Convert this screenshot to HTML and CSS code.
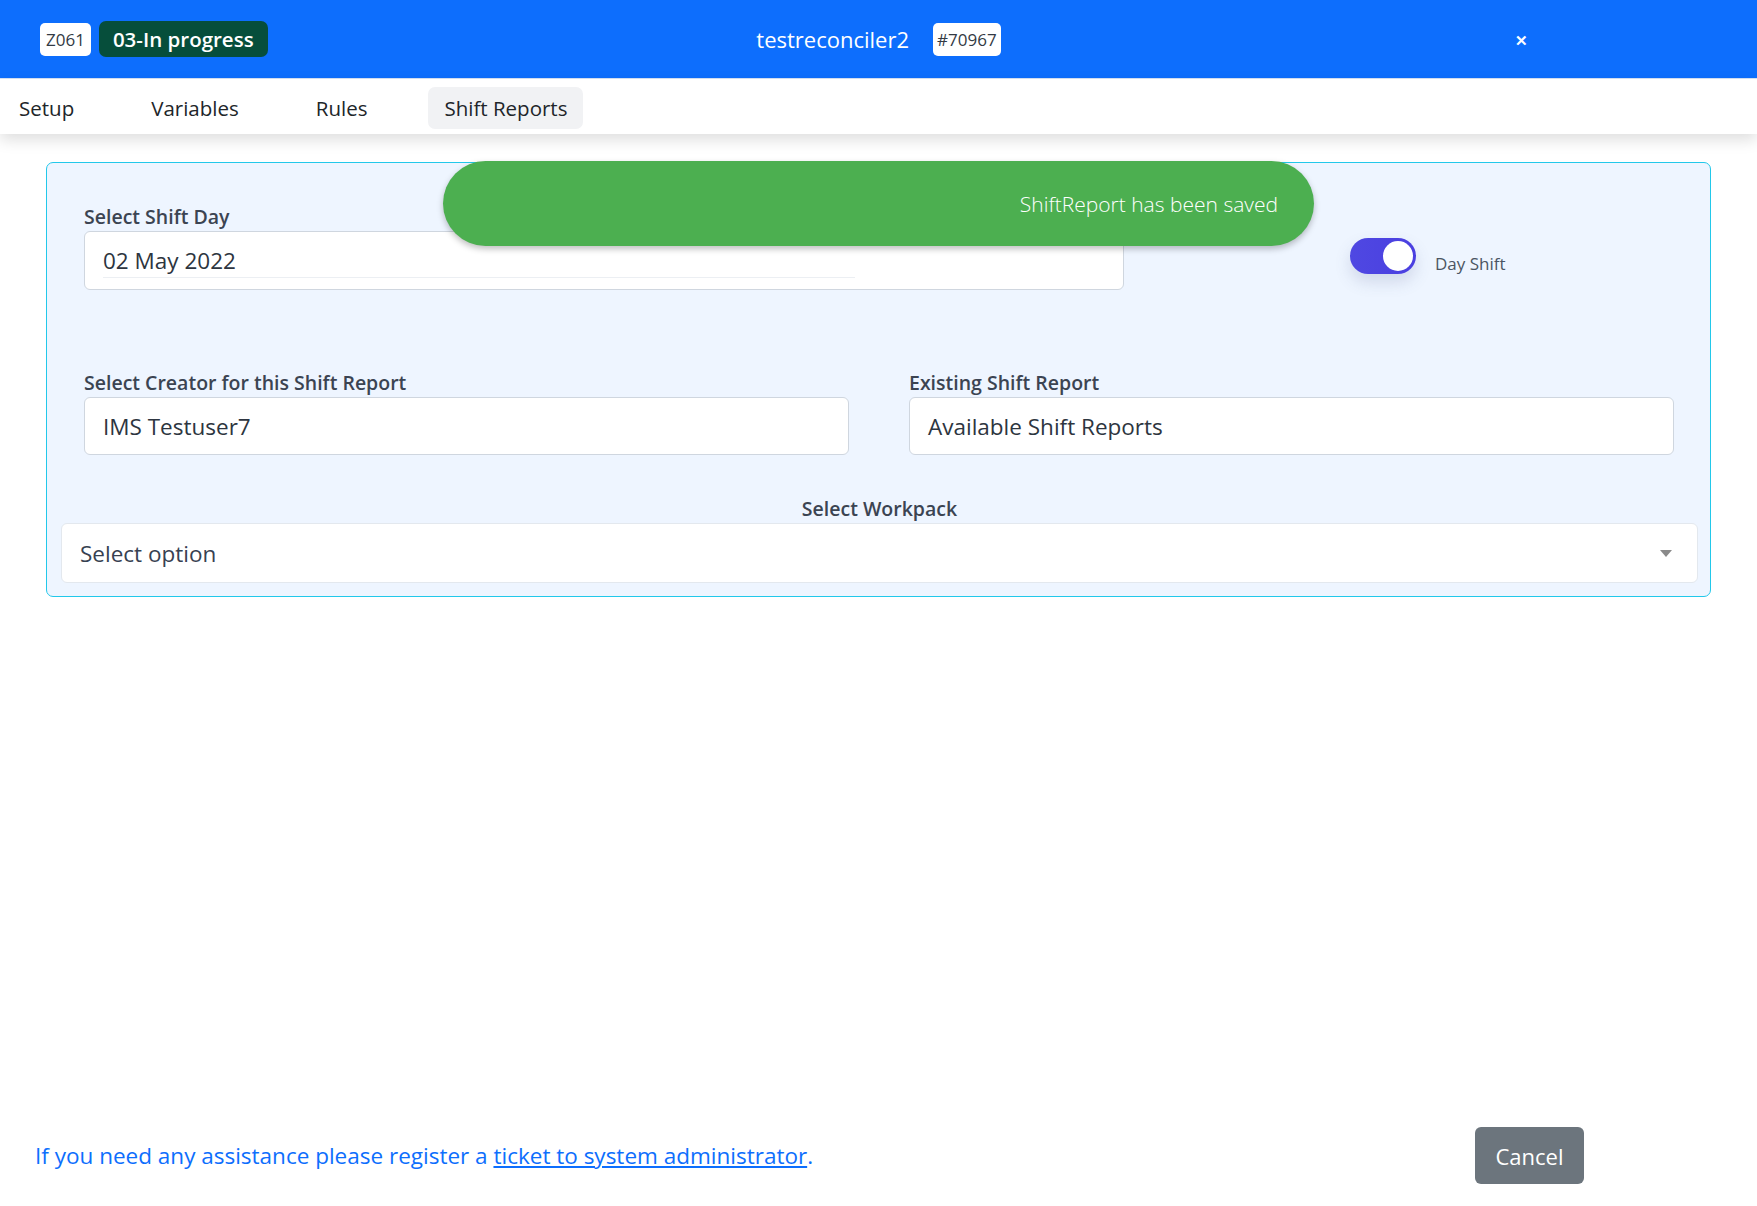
FILE: index.html
```html
<!DOCTYPE html>
<html lang="en">
<head>
<meta charset="utf-8">
<title>Shift Reports</title>
<link rel="stylesheet" href="styles.css">
</head>
<body>
<div class="page">
  <header class="topbar">
    <div class="topbar-left">
      <span class="badge-light">Z061</span>
      <span class="badge-status">03-In progress</span>
    </div>
    <div class="topbar-center">
      <span class="title">testreconciler2</span>
      <span class="badge-light badge-id">#70967</span>
    </div>
    <div class="topbar-right">
      <span class="close">&#x2715;</span>
    </div>
  </header>

  <nav class="tabs">
    <span class="tab">Setup</span>
    <span class="tab">Variables</span>
    <span class="tab">Rules</span>
    <span class="tab active">Shift Reports</span>
  </nav>

  <main class="content">
    <section class="card">
      <div class="row row-day">
        <div class="field field-date">
          <label class="label">Select Shift Day</label>
          <div class="input">
            <span class="date-value">02 May 2022</span>
          </div>
        </div>
        <div class="switch-group">
          <span class="switch"><span class="knob"></span></span>
          <span class="switch-label">Day Shift</span>
        </div>
      </div>

      <div class="row row-two">
        <div class="field">
          <label class="label">Select Creator for this Shift Report</label>
          <div class="input">IMS Testuser7</div>
        </div>
        <div class="field">
          <label class="label">Existing Shift Report</label>
          <div class="input">Available Shift Reports</div>
        </div>
      </div>

      <div class="row row-workpack">
        <label class="label label-center">Select Workpack</label>
        <div class="select">
          <span>Select option</span>
          <span class="caret"></span>
        </div>
      </div>
    </section>

    <div class="toast">ShiftReport has been saved</div>
  </main>

  <footer class="footer">
    <p class="help">If you need any assistance please register a <a href="#" class="help-link">ticket to system administrator</a>.</p>
    <button class="btn-cancel" type="button">Cancel</button>
  </footer>
</div>
</body>
</html>
```

FILE: styles.css
```css
* { box-sizing: border-box; }

html, body {
  margin: 0;
  padding: 0;
  height: 100%;
}

body {
  font-family: "Open Sans", "Noto Sans", sans-serif;
  color: #374151;
  background: #ffffff;
}

.page {
  min-height: 100vh;
  display: flex;
  flex-direction: column;
}

/* ---------- Top bar ---------- */
.topbar {
  height: 79px;
  background: #0d6efd;
  display: grid;
  grid-template-columns: 1fr auto 1fr;
  align-items: center;
  border-bottom: 1px solid #d7e3f5;
}

.topbar-left {
  display: flex;
  align-items: center;
  gap: 8px;
  padding-left: 40px;
}

.badge-light {
  display: inline-flex;
  align-items: center;
  height: 33px;
  padding: 0 6px;
  background: #ffffff;
  color: #333a44;
  border-radius: 5px;
  font-size: 17px;
  line-height: 1;
}

.badge-status {
  display: inline-flex;
  align-items: center;
  height: 36px;
  padding: 0 14px;
  background: #064e3b;
  color: #ffffff;
  border-radius: 7px;
  font-size: 20.5px;
  font-weight: 600;
  line-height: 1;
}

.topbar-center {
  display: flex;
  align-items: center;
  gap: 24px;
}

.title {
  color: #ffffff;
  font-size: 22px;
}

.badge-id {
  padding: 0 4px;
}

.topbar-right {
  display: flex;
  justify-content: flex-end;
  padding-right: 229px;
}

.close {
  color: #ffffff;
  font-size: 15px;
  font-weight: 700;
  line-height: 1;
  margin-top: 3px;
}

/* ---------- Tabs ---------- */
.tabs {
  height: 55px;
  display: flex;
  align-items: center;
  gap: 45px;
  padding: 2px 0 0 3px;
  background: #ffffff;
  box-shadow: 0 6px 14px rgba(0, 0, 0, 0.13);
  position: relative;
  z-index: 1;
}

.tab {
  font-size: 20.5px;
  color: #212529;
  padding: 7px 16px;
  border-radius: 7px;
  line-height: 28px;
}

.tab.active {
  background: #f1f2f4;
}

/* ---------- Content ---------- */
.content {
  position: relative;
  padding: 28px 46px 0 46px;
}

.card {
  background: #eef5ff;
  border: 1px solid #22c8ea;
  border-radius: 7px;
  padding: 41px 0 13px 0;
}

.row-day {
  display: flex;
  align-items: flex-start;
  padding: 0 37px 0 37px;
}

.field {
  display: flex;
  flex-direction: column;
}

.field-date {
  width: 1040px;
}

.label {
  font-size: 19.5px;
  font-weight: 600;
  color: #3b4452;
  line-height: 26px;
}

.input {
  height: 58px;
  margin-top: 1px;
  background: #ffffff;
  border: 1px solid #cfd6df;
  border-radius: 6px;
  padding: 0 18px;
  font-size: 22.5px;
  color: #2d3540;
  display: flex;
  align-items: center;
}

.field-date .input {
  height: 59px;
  align-items: stretch;
}

.date-value {
  display: flex;
  align-items: center;
  width: 752px;
  border-bottom: 1px solid #eceff3;
  margin-bottom: 11px;
  padding-top: 11px;
}

.switch-group {
  display: flex;
  align-items: center;
  margin-left: 226px;
  margin-top: 32px;
}

.switch {
  width: 66px;
  height: 36px;
  border-radius: 18px;
  background: linear-gradient(90deg, #4f48e2, #4a3fe0);
  position: relative;
  box-shadow: 0 8px 16px rgba(80, 90, 140, 0.18);
}

.knob {
  position: absolute;
  top: 3px;
  right: 3px;
  width: 30px;
  height: 30px;
  border-radius: 50%;
  background: #ffffff;
}

.switch-label {
  margin-left: 19px;
  margin-top: 16px;
  font-size: 17px;
  color: #4b5563;
}

.row-two {
  display: grid;
  grid-template-columns: 1fr 1fr;
  gap: 60px;
  padding: 0 36px 0 37px;
  margin-top: 80px;
}

.row-workpack {
  display: flex;
  flex-direction: column;
  padding: 0 12px 0 14px;
  margin-top: 41px;
}

.label-center {
  text-align: center;
}

.select {
  height: 60px;
  margin-top: 1px;
  background: #ffffff;
  border: 1px solid #e3e8ee;
  border-radius: 6px;
  padding: 0 25px 0 18px;
  font-size: 22.5px;
  color: #374151;
  display: flex;
  align-items: center;
  justify-content: space-between;
}

.caret {
  width: 0;
  height: 0;
  border-left: 6px solid transparent;
  border-right: 6px solid transparent;
  border-top: 7px solid #8a8a8a;
}

/* ---------- Toast ---------- */
.toast {
  position: absolute;
  top: 27px;
  left: 443px;
  width: 871px;
  height: 85px;
  border-radius: 43px;
  background: #4caf50;
  color: #ffffff;
  font-size: 21px;
  font-weight: 300;
  display: flex;
  align-items: center;
  justify-content: flex-end;
  padding-right: 36px;
  box-shadow: 0 3px 6px rgba(0, 0, 0, 0.25);
}

/* ---------- Footer ---------- */
.footer {
  margin-top: auto;
  display: flex;
  align-items: center;
  justify-content: space-between;
  padding: 0 173px 22px 35px;
}

.help {
  margin: 0;
  font-size: 22.5px;
  color: #0d6efd;
}

.help-link {
  color: #0d6efd;
  text-decoration: underline;
}

.btn-cancel {
  width: 109px;
  height: 57px;
  border: none;
  border-radius: 6px;
  background: #6c757d;
  color: #ffffff;
  font-family: inherit;
  font-size: 22px;
}
```
